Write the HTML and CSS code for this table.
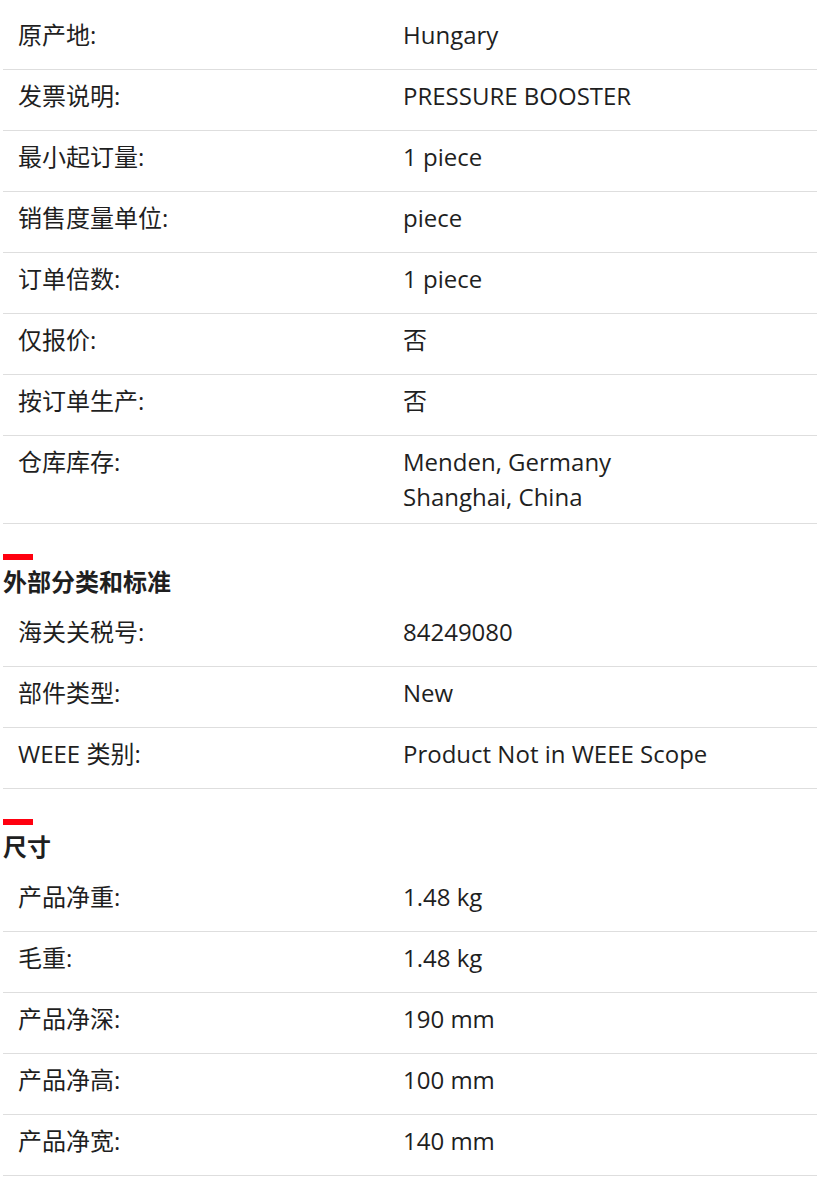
FILE: index.html
```html
<!DOCTYPE html>
<html lang="zh-CN">
<head>
<meta charset="utf-8">
<title>Product details</title>
<link rel="stylesheet" href="styles.css">
</head>
<body>
<div class="page">
  <dl class="specs">
    <div class="row"><dt>原产地:</dt><dd>Hungary</dd></div>
    <div class="row"><dt>发票说明:</dt><dd>PRESSURE BOOSTER</dd></div>
    <div class="row"><dt>最小起订量:</dt><dd>1 piece</dd></div>
    <div class="row"><dt>销售度量单位:</dt><dd>piece</dd></div>
    <div class="row"><dt>订单倍数:</dt><dd>1 piece</dd></div>
    <div class="row"><dt>仅报价:</dt><dd>否</dd></div>
    <div class="row"><dt>按订单生产:</dt><dd>否</dd></div>
    <div class="row"><dt>仓库库存:</dt><dd>Menden, Germany<br>Shanghai, China</dd></div>
  </dl>

  <section class="group">
    <h2 class="group-title">外部分类和标准</h2>
    <dl class="specs">
      <div class="row"><dt>海关关税号:</dt><dd>84249080</dd></div>
      <div class="row"><dt>部件类型:</dt><dd>New</dd></div>
      <div class="row"><dt>WEEE 类别:</dt><dd>Product Not in WEEE Scope</dd></div>
    </dl>
  </section>

  <section class="group">
    <h2 class="group-title">尺寸</h2>
    <dl class="specs">
      <div class="row"><dt>产品净重:</dt><dd>1.48 kg</dd></div>
      <div class="row"><dt>毛重:</dt><dd>1.48 kg</dd></div>
      <div class="row"><dt>产品净深:</dt><dd>190 mm</dd></div>
      <div class="row"><dt>产品净高:</dt><dd>100 mm</dd></div>
      <div class="row"><dt>产品净宽:</dt><dd>140 mm</dd></div>
    </dl>
  </section>
</div>
</body>
</html>
```

FILE: styles.css
```css
html, body {
  margin: 0;
  padding: 0;
  background: #ffffff;
}

body {
  font-family: "Open Sans", "Noto Sans CJK SC", sans-serif;
  color: #1f1f1f;
}

.page {
  padding: 9px 0 0 3px;
  width: 814px;
}

.specs {
  margin: 0;
  padding: 0;
}

.row {
  display: grid;
  grid-template-columns: 400px 1fr;
  align-items: start;
  box-sizing: border-box;
  min-height: 61px;
  padding: 8px 0 9px;
  border-bottom: 1px solid #dedede;
  font-size: 24px;
  line-height: 35px;
}

.row dt {
  margin: 0;
  padding-left: 15px;
}

.row dd {
  margin: 0;
}

.group {
  margin-top: 30px;
}

.group-title {
  margin: 0 0 5px 0;
  font-size: 24px;
  line-height: 41px;
  font-weight: 700;
  font-family: "Noto Sans CJK SC", sans-serif;
  color: #1f1f1f;
}

.group-title::before {
  content: "";
  display: block;
  width: 30px;
  height: 6px;
  background: #ff000f;
}
```
